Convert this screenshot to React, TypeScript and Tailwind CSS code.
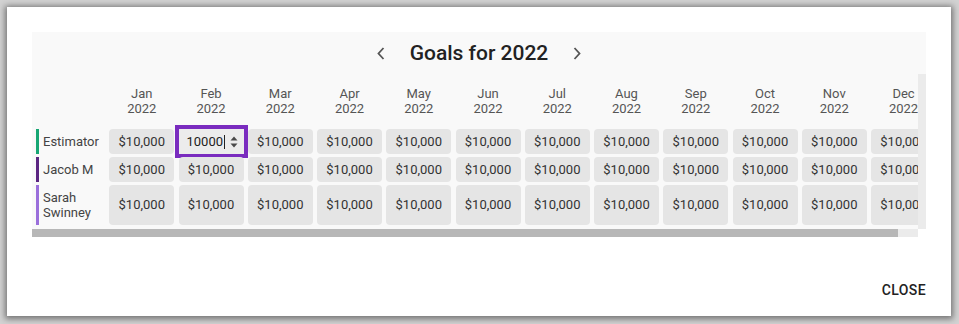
const months = ["Jan", "Feb", "Mar", "Apr", "May", "Jun", "Jul", "Aug", "Sep", "Oct", "Nov", "Dec"];

const people = [
  { name: "Estimator", color: "bg-[#17a673]", h: "h-[25px]" },
  { name: "Jacob M", color: "bg-[#5a2581]", h: "h-[25px]" },
  { name: "Sarah Swinney", color: "bg-[#9a6fdb]", h: "h-[40px]" },
];

function Chevron({ dir }: { dir: "left" | "right" }) {
  return (
    <svg width="8" height="13" viewBox="0 0 8 13" className="shrink-0">
      <polyline
        points={dir === "left" ? "6.5,1 1.5,6.5 6.5,12" : "1.5,1 6.5,6.5 1.5,12"}
        fill="none"
        stroke="#555"
        strokeWidth="1.8"
      />
    </svg>
  );
}

function Spinner() {
  return (
    <svg width="10" height="14" viewBox="0 0 10 14" className="shrink-0">
      <path d="M1.5 5.5 L5 1.5 L8.5 5.5 Z" fill="#4a4a4a" />
      <path d="M1.5 8.5 L5 12.5 L8.5 8.5 Z" fill="#4a4a4a" />
    </svg>
  );
}

export default function App() {
  return (
    <div
      className="w-[959px] h-[324px] bg-[#d2d2d2] p-[7px] pb-[8px] pr-[8px] overflow-hidden"
      style={{ fontFamily: "Roboto, 'Liberation Sans', sans-serif" }}
    >
      <div className="h-full bg-white shadow-[0_1px_6px_2px_rgba(0,0,0,0.45)] px-[25px] pt-[25px] flex flex-col">
        {/* Goals panel */}
        <div className="bg-[#f9f9f9]">
          <div className="h-[42px] flex items-center justify-center gap-[25px] text-[#222]">
            <Chevron dir="left" />
            <h2 className="text-[21px] font-medium leading-none">Goals for 2022</h2>
            <Chevron dir="right" />
          </div>

          <div className="flex">
            <div className="flex-1 overflow-hidden pb-[4px]">
              <div className="grid grid-cols-[73px_repeat(12,65px)] gap-x-[4.25px] gap-y-[3px] w-max">
                <div />
                {months.map((m) => (
                  <div
                    key={m}
                    className="pt-[12px] pb-[10px] text-center text-[13px] leading-[15px] text-[#555]"
                  >
                    <div>{m}</div>
                    <div>2022</div>
                  </div>
                ))}

                {people.map((p, r) => (
                  <>
                    <div key={p.name} className={`flex items-stretch gap-[4px] pl-[4px] ${p.h}`}>
                      <div className={`w-[3px] shrink-0 ${p.color}`} />
                      <div className="flex items-center text-[13px] leading-[15px] text-[#444] min-w-0">
                        {p.name}
                      </div>
                    </div>
                    {months.map((m, c) =>
                      r === 0 && c === 1 ? (
                        <div
                          key={m}
                          className={`${p.h} bg-[#ececec] outline-[4px] outline-solid outline-[#7a2cbf] flex items-center pl-[8px] pr-[5px] text-[13px] text-[#222]`}
                        >
                          <span>10000</span>
                          <span className="w-px h-[14px] bg-[#222] ml-[1px]" />
                          <span className="flex-1" />
                          <Spinner />
                        </div>
                      ) : (
                        <div
                          key={m}
                          className={`${p.h} rounded-[4px] bg-[#e5e5e5] flex items-center justify-center text-[13px] text-[#333]`}
                        >
                          $10,000
                        </div>
                      )
                    )}
                  </>
                ))}
              </div>
            </div>
            <div className="w-[8px] bg-[#ebebeb]" />
          </div>
        </div>

        {/* horizontal scrollbar */}
        <div className="flex h-[8px] pr-[8px]">
          <div className="w-[866px] bg-[#b7b7b7]" />
          <div className="flex-1 bg-[#ebebeb]" />
        </div>

        <div className="flex justify-end mt-[43px]">
          <button className="text-[14px] leading-[20px] font-medium tracking-[0.4px] text-[#222] uppercase">
            Close
          </button>
        </div>
      </div>
    </div>
  );
}
